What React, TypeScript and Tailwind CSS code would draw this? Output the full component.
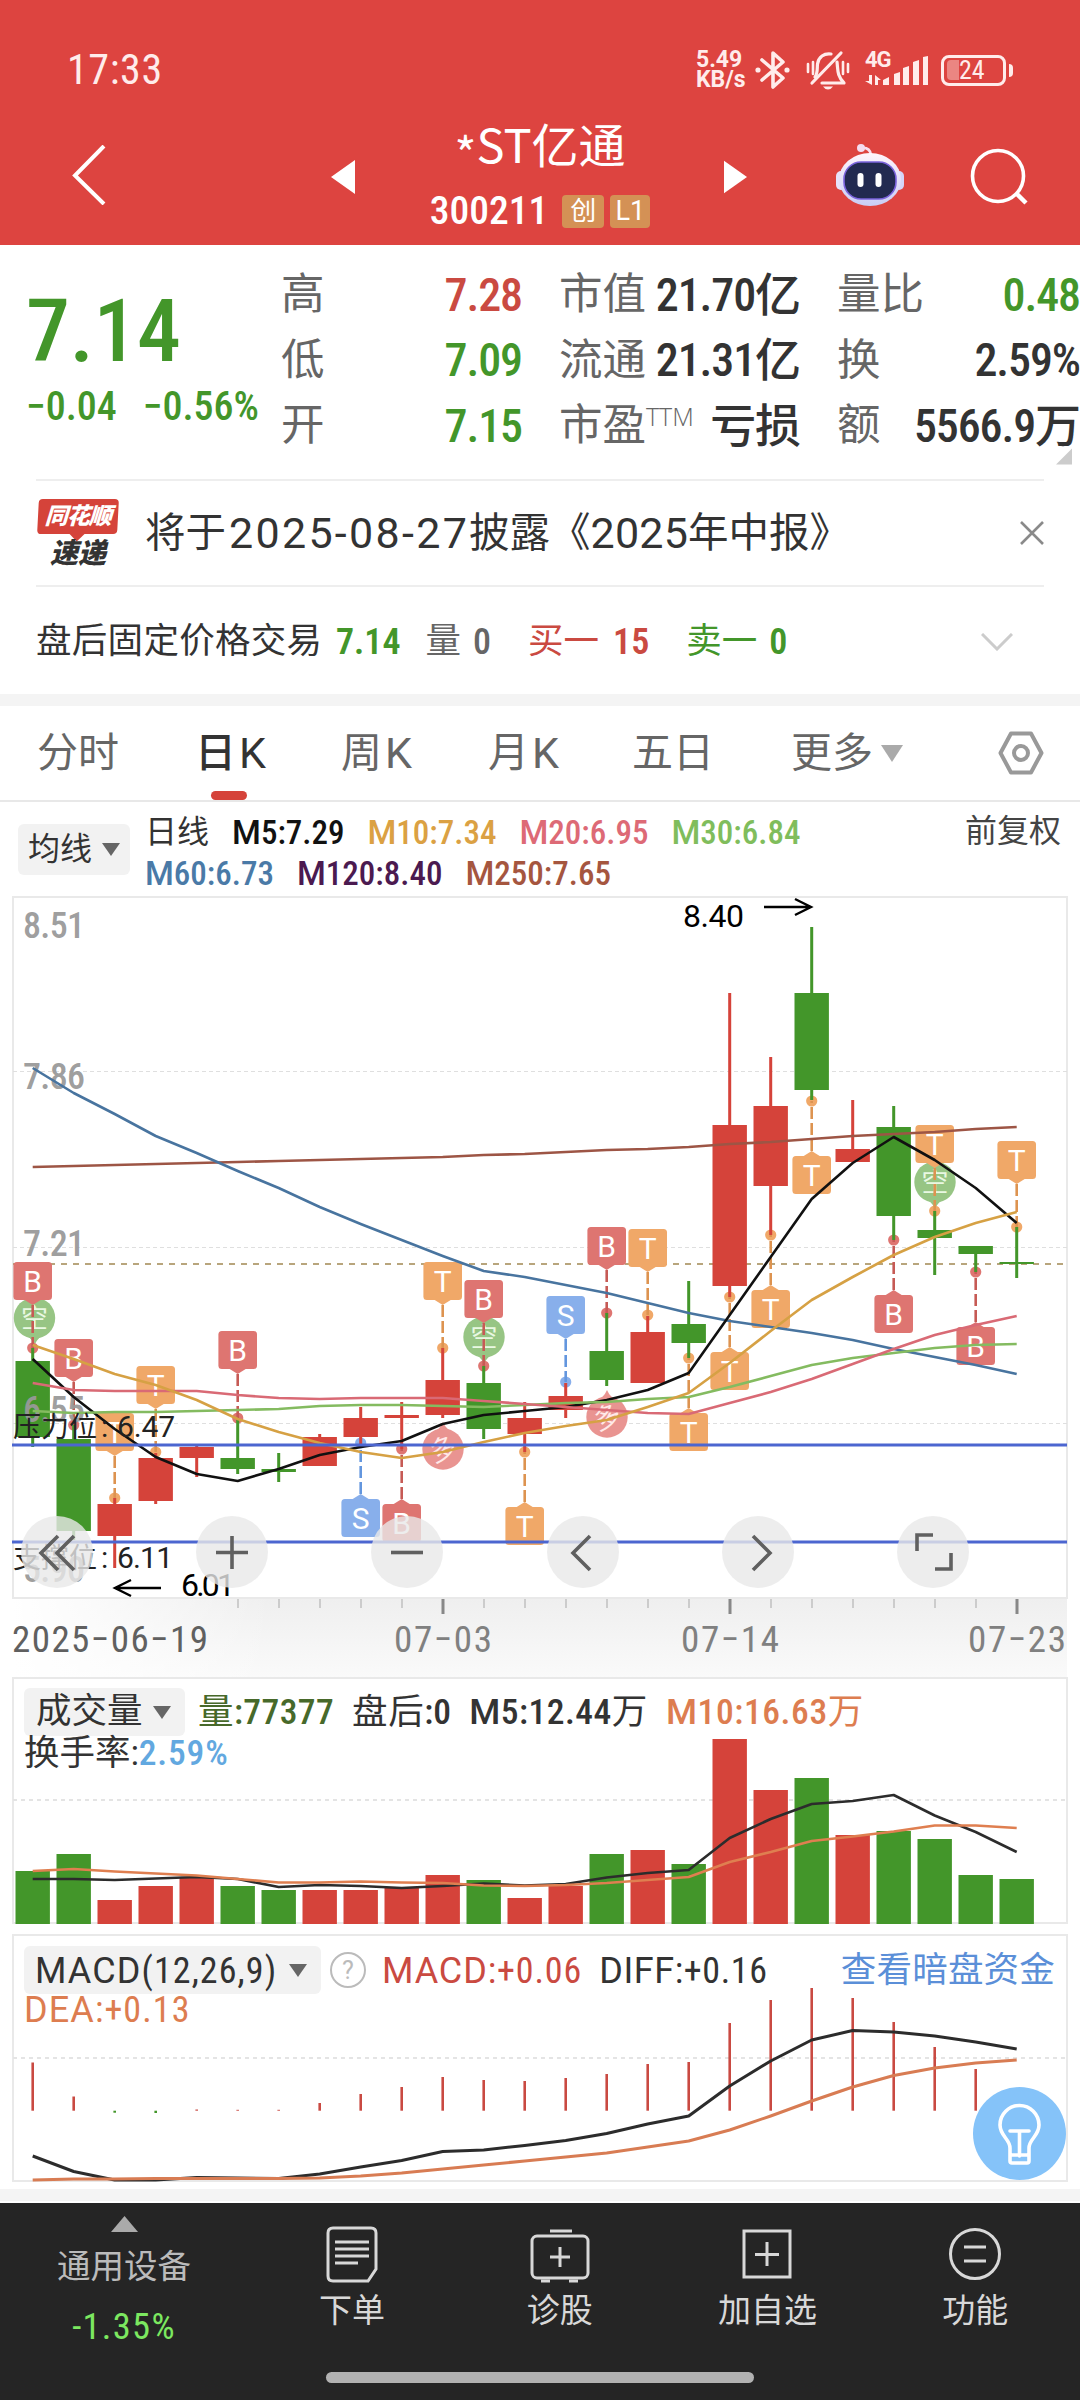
/**
 * Stock Detail Page
 *
 * Purpose:
 * Quote header, K-line chart, volume and MACD panels for a single stock.
 */

import React from 'react';

type Candle = { up: boolean; high: number; top: number; bottom: number; low: number };
type Marker = { i: number; kind: 'B' | 'T' | 'S'; box: number; dot: number };

const RED = '#d5433a';
const GREEN = '#43962a';

// Horizontal centre of the trading day with the given index
const dayX = (i: number) => 32.7 + i * 41;

const candles: Candle[] = [
    { up: false, high: 1348, top: 1361, bottom: 1437, low: 1447 },
    { up: false, high: 1425, top: 1439, bottom: 1531, low: 1540 },
    { up: true, high: 1498, top: 1504, bottom: 1536, low: 1568 },
    { up: true, high: 1453, top: 1458, bottom: 1501, low: 1504 },
    { up: true, high: 1446, top: 1447, bottom: 1458, low: 1477 },
    { up: false, high: 1418, top: 1458, bottom: 1469, low: 1474 },
    { up: false, high: 1453, top: 1469, bottom: 1472, low: 1482 },
    { up: true, high: 1434, top: 1437, bottom: 1466, low: 1466 },
    { up: true, high: 1407, top: 1418, bottom: 1437, low: 1444 },
    { up: true, high: 1402, top: 1415, bottom: 1418, low: 1449 },
    { up: true, high: 1348, top: 1380, bottom: 1415, low: 1418 },
    { up: false, high: 1366, top: 1383, bottom: 1429, low: 1439 },
    { up: true, high: 1402, top: 1418, bottom: 1434, low: 1452 },
    { up: true, high: 1383, top: 1396, bottom: 1410, low: 1418 },
    { up: false, high: 1313, top: 1351, bottom: 1380, low: 1386 },
    { up: true, high: 1316, top: 1332, bottom: 1383, low: 1383 },
    { up: false, high: 1281, top: 1324, bottom: 1343, low: 1358 },
    { up: true, high: 993, top: 1125, bottom: 1286, low: 1297 },
    { up: true, high: 1057, top: 1106, bottom: 1186, low: 1235 },
    { up: false, high: 927, top: 993, bottom: 1090, low: 1100 },
    { up: true, high: 1100, top: 1149, bottom: 1162, low: 1162 },
    { up: false, high: 1106, top: 1127, bottom: 1216, low: 1240 },
    { up: false, high: 1211, top: 1230, bottom: 1238, low: 1275 },
    { up: false, high: 1246, top: 1246, bottom: 1254, low: 1272 },
    { up: false, high: 1227, top: 1262, bottom: 1264, low: 1278 },
];

const markers: Marker[] = [
    { i: 0, kind: 'B', box: 1262, dot: 1348 },
    { i: 1, kind: 'B', box: 1339, dot: 1425 },
    { i: 2, kind: 'T', box: 1413, dot: 1498 },
    { i: 3, kind: 'T', box: 1366, dot: 1452 },
    { i: 5, kind: 'B', box: 1331, dot: 1418 },
    { i: 8, kind: 'S', box: 1499, dot: 1443 },
    { i: 9, kind: 'B', box: 1504, dot: 1449 },
    { i: 10, kind: 'T', box: 1262, dot: 1348 },
    { i: 11, kind: 'B', box: 1280, dot: 1366 },
    { i: 12, kind: 'T', box: 1507, dot: 1452 },
    { i: 13, kind: 'S', box: 1296, dot: 1382 },
    { i: 14, kind: 'B', box: 1227, dot: 1313 },
    { i: 15, kind: 'T', box: 1229, dot: 1315 },
    { i: 16, kind: 'T', box: 1413, dot: 1358 },
    { i: 17, kind: 'T', box: 1352, dot: 1297 },
    { i: 18, kind: 'T', box: 1290, dot: 1235 },
    { i: 19, kind: 'T', box: 1156, dot: 1101 },
    { i: 21, kind: 'B', box: 1295, dot: 1240 },
    { i: 22, kind: 'T', box: 1125, dot: 1211 },
    { i: 23, kind: 'B', box: 1327, dot: 1272 },
    { i: 24, kind: 'T', box: 1141, dot: 1227 },
];

const markerColors = {
    B: { fill: '#de7571', line: '#c65a55' },
    T: { fill: '#f0a868', line: '#dd9350' },
    S: { fill: '#88afeb', line: '#6396de' },
};

const ma5 = [1359, 1397, 1429, 1457, 1474, 1481, 1469, 1455, 1447, 1441, 1424, 1415, 1411, 1407, 1400, 1390, 1373, 1315, 1257, 1199, 1163, 1137, 1160, 1188, 1223];
const ma10 = [1345, 1359, 1374, 1385, 1400, 1419, 1432, 1443, 1452, 1458, 1452, 1442, 1433, 1426, 1420, 1407, 1393, 1363, 1331, 1300, 1277, 1255, 1237, 1223, 1212];
const ma20 = [1383, 1390, 1391, 1391, 1391, 1395, 1398, 1399, 1398, 1398, 1398, 1401, 1404, 1407, 1410, 1413, 1414, 1403, 1392, 1379, 1364, 1349, 1335, 1325, 1316];
const ma30 = [1411, 1413, 1412, 1412, 1411, 1410, 1409, 1406, 1405, 1405, 1406, 1407, 1405, 1403, 1402, 1399, 1397, 1387, 1376, 1365, 1358, 1353, 1348, 1345, 1344];
const ma60 = [1068, 1093, 1114, 1136, 1153, 1171, 1188, 1207, 1224, 1240, 1256, 1271, 1277, 1285, 1293, 1303, 1313, 1321, 1327, 1333, 1340, 1349, 1357, 1365, 1374];
const ma250 = [1167, 1166, 1165, 1164, 1163, 1162, 1161, 1160, 1159, 1158, 1157, 1155, 1154, 1152, 1150, 1149, 1147, 1144, 1142, 1139, 1136, 1134, 1132, 1129, 1127];

const volume = [1871, 1854, 1900, 1886, 1878, 1886, 1890, 1890, 1890, 1888, 1875, 1880, 1898, 1886, 1854, 1850, 1864, 1739, 1790, 1778, 1835, 1831, 1839, 1875, 1879];
const volMa5 = [1879, 1879, 1880, 1878.5, 1877, 1879, 1887, 1885, 1886, 1888, 1886, 1883.5, 1885.5, 1884, 1877.5, 1873, 1870, 1838, 1819, 1804, 1801, 1795, 1815.5, 1832, 1852];
const volMa10 = [1871, 1869, 1871.5, 1873.5, 1875.5, 1879, 1882.5, 1882.5, 1881.5, 1882.5, 1883, 1885.5, 1886, 1885, 1883, 1880, 1877, 1862, 1852, 1841, 1836.5, 1831.5, 1825.5, 1825.5, 1828];

const MACD_ZERO = 2110.7;
const macd = [2062.5, 2096.5, 2112.7, 2113, 2109.5, 2109.8, 2109.8, 2103, 2094, 2087, 2077, 2080, 2081, 2078, 2074, 2064, 2062, 2023, 2000, 1988, 1998, 2022, 2047, 2069, 2088];
const diff = [2156, 2171.5, 2180, 2180, 2177.5, 2178, 2178.5, 2174, 2167, 2160.5, 2151.5, 2150, 2145.5, 2140.5, 2133.5, 2124, 2116, 2086, 2061, 2040, 2030.5, 2032, 2036, 2042, 2049];
const dea = [2180, 2179, 2179, 2178.5, 2178.5, 2178.5, 2178.5, 2178, 2176, 2173, 2169, 2165, 2161, 2157, 2153, 2147, 2141, 2130, 2116, 2101, 2087, 2075.5, 2068, 2063, 2060];

/** Polyline through one value per trading day */
const Line = ({ data, color, width = 2.6 }: { data: number[]; color: string; width?: number }) => (
    <polyline
        points={data.map((y, i) => `${dayX(i)},${y}`).join(' ')}
        fill="none"
        stroke={color}
        strokeWidth={width}
        strokeLinejoin="round"
    />
);

/** Lettered signal box joined to its candle by a dashed stem */
const SignalMarker = ({ i, kind, box, dot }: Marker) => {
    const x = dayX(i);
    const above = box < dot;
    const edge = above ? box + 38 : box;
    const tip = above ? edge + 5 : edge - 5;
    const { fill, line } = markerColors[kind];
    return (
        <g>
            <circle cx={x} cy={dot} r={5.6} fill={fill} />
            <line x1={x} x2={x} y1={tip} y2={dot} stroke={line} strokeWidth={2.6} strokeDasharray="12 4" />
            <path d={`M${x - 8} ${edge}L${x} ${tip}L${x + 8} ${edge}z`} fill={fill} />
            <rect x={x - 19.3} y={box} width={38.6} height={38} rx={3.5} fill={fill} />
            <text x={x} y={box + 30} textAnchor="middle" fill="#fff" className="font-['Roboto'] text-[30px]">{kind}</text>
        </g>
    );
};

/** Round long / short bubble */
const Bubble = ({ x, y, kind }: { x: number; y: number; kind: '空' | '多' }) => {
    const down = kind === '空';
    const s = down ? 1 : -1;
    return (
        <g>
            <path
                d={`M${x - 14} ${y + 14 * s}Q${x - 3} ${y + 19 * s} ${x} ${y + 27 * s}Q${x + 3} ${y + 19 * s} ${x + 14} ${y + 14 * s}z`}
                fill={down ? '#97c584' : '#e99491'}
            />
            <circle cx={x} cy={y} r={20.7} fill={down ? '#97c584' : '#e99491'} />
            <text
                x={x}
                y={y + 10}
                textAnchor="middle"
                fill={down ? '#e9f8e2' : '#ffe9e8'}
                className="text-[27px]"
                transform={down ? undefined : `rotate(-20 ${x} ${y})`}
            >
                {kind}
            </text>
        </g>
    );
};

const Triangle = ({ className }: { className: string }) => (
    <svg viewBox="0 0 20 16" className={className} preserveAspectRatio="none"><path d="M0 0h20L10 16z" fill="currentColor" /></svg>
);

/** Latin capitals at regular width, next to condensed figures */
const Caps = ({ children }: { children: React.ReactNode }) => <span className="font-['Roboto']">{children}</span>;

const StatusBar = () => (
    <div className="flex h-11 items-center pl-[67px] pr-[67px] text-[#ffeceb]">
        <span className="text-[42px] leading-none tracking-[0.6px]">17:33</span>
        <div className="ml-auto flex items-center">
            <div className="w-[50px] font-['Roboto'] text-[23px] font-bold leading-[20px]">
                <div>5.49</div>
                <div>KB/s</div>
            </div>
            <svg viewBox="0 0 36 40" className="ml-[9px] h-10 w-9" fill="none" stroke="currentColor" strokeWidth="3.6" strokeLinejoin="round" strokeLinecap="round">
                <path d="M7 10L28 28L18 37V3L28 12L7 30" />
                <circle cx="3" cy="20" r="1.6" fill="currentColor" strokeWidth="2" />
                <circle cx="32" cy="20" r="1.6" fill="currentColor" strokeWidth="2" />
            </svg>
            <svg viewBox="0 0 44 40" className="ml-[15px] h-10 w-11" fill="none" stroke="currentColor" strokeWidth="3.2" strokeLinecap="round">
                <path d="M6 33L35 3" />
                <path d="M9 27C12 23 11 18 11.500 14C12.500 7 18 3 25 4M31 12C32 20 31 26 38 33H16" strokeLinejoin="round" />
                <path d="M2 14v8M7 12v12M42 14v8M37 12v12" strokeWidth="2.600" />
                <path d="M17 36.500h10q-2 3-5 3t-5-3z" fill="currentColor" stroke="none" />
            </svg>
            <div className="ml-[15px] flex h-10 w-[64px] flex-col">
                <span className="h-[21px] font-['Roboto'] text-[22px] font-bold leading-[20px] tracking-[-1px]">4G</span>
                <svg viewBox="0 0 64 32" className="-mt-[15px] h-8 w-16 shrink-0" fill="currentColor">
                    <path d="M4 19h3v10L0 25h4zM10 29V19l6 5h-3v5z" />
                    <path d="M18 29v-5l6-3v8zM29 29V18l6-2v13zM38 29V12l6-2v19zM48 29V6l6-2v25zM58 29V1l5-1v29z" />
                </svg>
            </div>
            <div className="ml-[12px] flex h-[31px] w-[65px] items-center rounded-[8px] border-[3px] border-current px-[3px]">
                <span className="h-[20px] w-[12px] rounded-l-[4px] bg-[#eb8682]" />
                <span className="text-[26px] leading-none">24</span>
            </div>
            <span className="ml-[3px] h-[13px] w-[4px] rounded-r-full bg-current" />
        </div>
    </div>
);

const Robot = () => (
    <svg viewBox="0 0 68 64" className="ml-[89px] h-16 w-[68px]">
        <defs>
            <linearGradient id="shell" x1="0" y1="0" x2="0" y2="1">
                <stop offset="0" stopColor="#fff5fb" />
                <stop offset="1" stopColor="#c9cdf5" />
            </linearGradient>
        </defs>
        <path d="M25 5q9-1 10 7" fill="none" stroke="#f8dff0" strokeWidth="2.600" />
        <circle cx="25" cy="5" r="4" fill="#f4dcf0" />
        <rect x="0" y="28" width="10" height="19" rx="5" fill="#e6e2fa" />
        <rect x="58" y="28" width="10" height="19" rx="5" fill="#d5d5f8" />
        <ellipse cx="34" cy="36.500" rx="31" ry="26.500" fill="url(#shell)" />
        <rect x="8" y="19" width="52" height="37" rx="17" fill="#222a50" stroke="#7a63dc" strokeWidth="1.600" />
        <rect x="21.500" y="30" width="6" height="14" rx="3" fill="#fff" />
        <rect x="39.500" y="30" width="6" height="14" rx="3" fill="#fff" />
    </svg>
);

const Header = () => (
    <header className="h-[245px] bg-[#dd4440] pt-[48px] text-white">
        <StatusBar />
        <div className="flex h-[153px] items-start pl-[72px]">
            <svg viewBox="0 0 34 60" className="mt-[53px] h-[60px] w-[34px]" fill="none" stroke="currentColor" strokeWidth="4"><path d="M32 1L3 30.500L32 59" /></svg>
            <svg viewBox="0 0 24 34" className="ml-[225px] mt-[68px] h-[34px] w-6" fill="currentColor"><path d="M24 0v34L0 17z" /></svg>
            <div className="ml-[77px] flex w-[216px] flex-col items-center">
                <div className="mt-[22px] flex h-[56px] items-center whitespace-nowrap leading-none">
                    <span className="font-['Noto_Sans_CJK_SC'] text-[47px]"><span className="inline-block translate-y-[9px]">*</span>ST亿通</span>
                </div>
                <div className="mt-[19px] flex h-[44px] items-center gap-[6px]">
                    <span className="mr-[8px] text-[39.5px] font-medium leading-none">300211</span>
                    <span className="flex h-[33px] w-[42px] items-center justify-center rounded-[4px] bg-[#d49155] text-[26px] leading-none">创</span>
                    <span className="flex h-[33px] w-[40px] items-center justify-center rounded-[4px] bg-[#d49155] font-['Roboto'] text-[27px] leading-none">L1</span>
                </div>
            </div>
            <svg viewBox="0 0 24 34" className="ml-[76px] mt-[68px] h-[34px] w-[23px]" fill="currentColor"><path d="M0 0v34L24 17z" /></svg>
            <div className="mt-[51px]"><Robot /></div>
            <svg viewBox="0 0 58 58" className="ml-[66px] mt-[56px] h-[58px] w-[58px]" fill="none" stroke="currentColor" strokeWidth="3.600"><circle cx="28" cy="28" r="25.500" /><path d="M46 45l10 10" strokeWidth="4.500" /></svg>
        </div>
    </header>
);

const Stat = ({ label, value, color = 'text-[#333]' }: { label: React.ReactNode; value: string; color?: string }) => (
    <div className="flex h-[65.5px] items-center justify-between whitespace-nowrap leading-none">
        <span className="text-[43.5px] text-[#666]">{label}</span>
        <span className={`text-[46px] font-medium tracking-[-1.1px] ${color}`}>{value}</span>
    </div>
);

const Quote = () => (
    <section className="relative flex h-[234px] pt-[17px]">
        <div className="w-[281px] pl-[26px] font-medium text-[#43962a]">
            <div className="mt-[23px] text-[88px] leading-[92px] tracking-[-0.5px]">7.14</div>
            <div className="mt-[8px] flex justify-between pr-[22px] text-[40px] leading-[44px] whitespace-nowrap"><span>−0.04</span><span>−0.56%</span></div>
        </div>
        <div className="w-[241px]">
            <Stat label="高" value="7.28" color="text-[#ca4a41]" />
            <Stat label="低" value="7.09" color="text-[#43962a]" />
            <Stat label="开" value="7.15" color="text-[#43962a]" />
        </div>
        <div className="ml-[37px] w-[241px]">
            <Stat label="市值" value="21.70亿" />
            <Stat label="流通" value="21.31亿" />
            <Stat label={<>市盈<span className="relative -top-[14px] font-['Open_Sans'] text-[25px] font-light">TTM</span></>} value="亏损" />
        </div>
        <div className="ml-[37px] w-[243px]">
            <Stat label="量比" value="0.48" color="text-[#43962a]" />
            <Stat label="换" value="2.59%" />
            <Stat label="额" value="5566.9万" />
        </div>
        <svg viewBox="0 0 16 16" className="absolute bottom-[14px] right-[8px] h-[17px] w-4" fill="#ccc"><path d="M16 0v16H0z" /></svg>
    </section>
);

const News = () => (
    <section className="mx-9 flex h-[108px] items-center border-y-2 border-[#eee]">
        <div className="flex w-[84px] flex-col items-center font-black italic leading-none">
            <div className="relative flex h-[35px] w-[80px] -skew-x-3 items-center justify-center rounded-[4px] bg-[#d5433a] text-[23px] tracking-[-1px] text-white">
                同花顺
                <span className="absolute -bottom-[5px] left-[34px] h-3 w-3 rotate-45 bg-[#d5433a]" />
            </div>
            <div className="relative mt-[5px] h-[29px] text-[28px] leading-[29px] text-[#333]">速递</div>
        </div>
        <span className="ml-[25px] flex items-center whitespace-nowrap font-['Roboto','Noto_Sans_CJK_SC',sans-serif] text-[40.5px] leading-none text-[#333]">
            将于
            <span className="pl-[3px] text-[43px] tracking-[2.3px]">2025-08-27</span>
            披露《
            <span className="text-[43px] tracking-[0.2px]">2025</span>
            年中报》
        </span>
        <svg viewBox="0 0 24 24" className="ml-auto h-6 w-6" fill="none" stroke="#8a8a8a" strokeWidth="2.600"><path d="M1 1l22 22M23 1L1 23" /></svg>
    </section>
);

const AfterHours = () => (
    <section className="flex h-[107px] items-center whitespace-nowrap pl-[36px] pr-[67px] pt-[2px] text-[35.5px] leading-none">
        <span className="w-[286px] tracking-[0.3px] text-[#333]">盘后固定价格交易</span>
        <b className="ml-[14px] text-[36px] font-semibold text-[#43962a]">7.14</b>
        <span className="ml-[25px] text-[#666]">量</span>
        <b className="ml-[12px] text-[36px] font-medium text-[#666]">0</b>
        <span className="ml-[37px] text-[#ca4a41]">买一</span>
        <b className="ml-[14px] text-[36px] font-semibold text-[#ca4a41]">15</b>
        <span className="ml-[37px] text-[#43962a]">卖一</span>
        <b className="ml-[12px] text-[36px] font-semibold text-[#43962a]">0</b>
        <svg viewBox="0 0 32 18" className="ml-auto h-[18px] w-8" fill="none" stroke="#ccc" strokeWidth="3"><path d="M1 1l15 15L31 1" /></svg>
    </section>
);

const Tabs = () => (
    <nav className="flex h-[96px] items-center whitespace-nowrap border-b-2 border-[#e8e8e8] pl-[37px] pr-9 text-[41px] leading-none text-[#666]">
        <span className="w-[158px]">分时</span>
        <span className="relative flex h-full w-[146px] items-center gap-[3px] font-medium text-[#333]">
            日<span className="font-['Roboto'] text-[43px] font-normal">K</span>
            <i className="absolute bottom-0 left-[16px] h-[9px] w-[36px] rounded-full bg-[#d5433a]" />
        </span>
        <span className="flex w-[147px] items-center gap-[3px]">周<span className="font-['Roboto'] text-[43px]">K</span></span>
        <span className="flex w-[144px] items-center gap-[3px]">月<span className="font-['Roboto'] text-[43px]">K</span></span>
        <span className="w-[159px]">五日</span>
        <span className="flex items-center gap-[8px]">更多<Triangle className="h-[17px] w-[22px] text-[#aaa]" /></span>
        <svg viewBox="0 0 46 44" className="ml-auto h-11 w-[46px]" fill="none" stroke="#999" strokeWidth="4" strokeLinejoin="round"><path d="M13 2.500h20L43.500 22L33 41.500H13L2.500 22z" /><circle cx="23" cy="22" r="7" /></svg>
    </nav>
);

const MaLegend = () => (
    <section className="flex h-[94px] whitespace-nowrap pl-[18px] pr-[19px] text-[33px] leading-[41px]">
        <div className="mt-[22px] flex h-[51px] w-[112px] items-center rounded-[6px] bg-[#f2f2f2] pl-[10px] text-[32px] text-[#333]">
            均线<Triangle className="ml-[10px] h-[13px] w-[18px] text-[#666]" />
        </div>
        <div className="ml-[15px] mt-[10px] font-medium">
            <div className="flex gap-[23px]">
                <span className="text-[32px] font-normal text-[#333]">日线</span>
                <span className="text-[#111]"><Caps>M</Caps>5:7.29</span>
                <span className="text-[#dba143]"><Caps>M</Caps>10:7.34</span>
                <span className="text-[#dd6a76]"><Caps>M</Caps>20:6.95</span>
                <span className="text-[#80bd5c]"><Caps>M</Caps>30:6.84</span>
            </div>
            <div className="flex gap-[23px]">
                <span className="text-[#4a7aa7]"><Caps>M</Caps>60:6.73</span>
                <span className="text-[#4b1a50]"><Caps>M</Caps>120:8.40</span>
                <span className="text-[#a5563f]"><Caps>M</Caps>250:7.65</span>
            </div>
        </div>
        <span className="ml-auto mt-[9px] text-[32px] text-[#444]">前复权</span>
    </section>
);

const axisLabels = [
    { text: '8.51', y: 938 },
    { text: '7.86', y: 1089 },
    { text: '7.21', y: 1256 },
    { text: '6.55', y: 1422 },
    { text: '5.90', y: 1582 },
];

const chartControls = [
    'M37 20L20 37L37 54M53 20L36 37L53 54',
    'M36 20V53M20 36.500H52',
    'M20 36.500H52',
    'M43 20L26 37L43 54',
    'M31 20L48 37L31 54',
    'M36 19H20V35M38 53H54V37',
];

const KLineChart = () => (
    <section className="relative h-[781px]">
        <svg viewBox="0 896 1080 781" className="h-full w-full">
            <defs>
                <linearGradient id="axisFade" x1="0" y1="0" x2="0" y2="1">
                    <stop offset="0" stopColor="#efefef" />
                    <stop offset="1" stopColor="#fafafa" />
                </linearGradient>
                <linearGradient id="axisSide" x1="0" y1="0" x2="1" y2="0">
                    <stop offset="0" stopColor="#fff" />
                    <stop offset="1" stopColor="#fff" stopOpacity="0" />
                </linearGradient>
            </defs>
            <rect x="13" y="1599" width="1054" height="78" fill="url(#axisFade)" />
            <rect x="13" y="1599" width="260" height="78" fill="url(#axisSide)" />
            <rect x="13" y="897" width="1054" height="701" fill="none" stroke="#e9e9e9" strokeWidth="2" />
            {[1071.5, 1247.5, 1423.5].map(y => (
                <line key={y} x1="13" x2="1067" y1={y} y2={y} stroke="#dfdfdf" strokeWidth="1.200" strokeDasharray="4 3" />
            ))}
            <line x1="13" x2="1067" y1="1264" y2="1264" stroke="#b8a57c" strokeWidth="2" strokeDasharray="6 6" />

            <Bubble x={34.5} y={1318} kind="空" />
            <Bubble x={484} y={1337} kind="空" />
            <Bubble x={935} y={1182} kind="空" />
            <Bubble x={443} y={1449} kind="多" />
            <Bubble x={607} y={1417} kind="多" />
            {markers.map(m => <SignalMarker key={m.i} {...m} />)}

            {candles.map((c, i) => (
                <g key={i} fill={c.up ? RED : GREEN}>
                    <rect x={dayX(i) - 1.5} y={c.high} width={3} height={c.low - c.high} />
                    <rect x={dayX(i) - 17.2} y={c.top} width={34.4} height={c.bottom - c.top} />
                </g>
            ))}

            <g fill="#999" fillOpacity="0.95" className="text-[36px] font-medium">
                {axisLabels.map(l => <text key={l.text} x="23" y={l.y} textLength="62">{l.text}</text>)}
            </g>
            <Line data={ma250} color="#9d5545" />
            <Line data={ma60} color="#48749f" />
            <Line data={ma5} color="#111" />
            <Line data={ma30} color="#84bb60" />
            <Line data={ma20} color="#d96a75" />
            <Line data={ma10} color="#d6a144" />
            <line x1="12" x2="1067" y1="1445" y2="1445" stroke="#4c66d0" strokeWidth="2.800" />
            <line x1="12" x2="1067" y1="1542" y2="1542" stroke="#4c66d0" strokeWidth="2.800" />

            <g fill="#222" className="font-['Roboto','Noto_Sans_CJK_SC',sans-serif] text-[30px]">
                <text x="13" y="1437" textLength="84" className="text-[28px]">压力位</text>
                <text x="101" y="1437">:</text>
                <text x="117" y="1437" textLength="58">6.47</text>
                <text x="13" y="1568" textLength="84" className="text-[28px]">支撑位</text>
                <text x="101" y="1568">:</text>
                <text x="117" y="1568" textLength="56">6.11</text>
            </g>
            <g fill="#000" className="font-['Roboto'] text-[32px]">
                <text x="683" y="927" textLength="61">8.40</text>
                <text x="181" y="1596" textLength="54">6.01</text>
            </g>
            <path d="M764 907H811M795 899L811 907L795 915M161 1588H115M131 1580L115 1588L131 1596" fill="none" stroke="#000" strokeWidth="2.400" />

            {Array.from({ length: 20 }, (_, k) => k + 5).map(i => {
                const major = i === 10 || i === 17 || i === 24;
                return <rect key={i} x={dayX(i) - (major ? 1.2 : 0.5)} y={1599} width={major ? 3 : 1.6} height={major ? 15 : 9} fill={major ? '#888' : '#c4c4c4'} />;
            })}
            <g fill="#808080" className="font-['Roboto_Condensed'] text-[37px]">
                <text x="12" y="1652" textLength="196" fill="#606060">2025−06−19</text>
                <text x="394" y="1652" textLength="98">07−03</text>
                <text x="681" y="1652" textLength="98">07−14</text>
                <text x="968" y="1652" textLength="98">07−23</text>
            </g>
        </svg>
        <div className="absolute left-[21px] top-[620px] flex gap-[103.2px]">
            {chartControls.map(d => (
                <button key={d} className="h-[72px] w-[72px] rounded-full bg-[#e8e8e8]/80">
                    <svg viewBox="0 0 72 72" fill="none" stroke="#606060" strokeWidth="3.600"><path d={d} /></svg>
                </button>
            ))}
        </div>
    </section>
);

const VolumePanel = () => (
    <section className="relative h-[248px]">
        <svg viewBox="0 1677 1080 248" className="h-full w-full">
            <rect x="13" y="1678" width="1054" height="245" fill="none" stroke="#e9e9e9" strokeWidth="2" />
            <line x1="13" x2="1067" y1="1800" y2="1800" stroke="#e4e4e4" strokeWidth="2" strokeDasharray="4 4" />
            {volume.map((y, i) => (
                <rect key={i} x={dayX(i) - 17.2} y={y} width={34.4} height={1924 - y} fill={candles[i].up ? RED : GREEN} />
            ))}
            <Line data={volMa5} color="#2c2c2c" />
            <Line data={volMa10} color="#df7f50" />
        </svg>
        <div className="absolute left-[24px] top-[11px] whitespace-nowrap text-[35.5px] leading-none text-[#333]">
            <div className="flex h-[48px] items-center">
                <div className="flex h-full w-[161px] items-center rounded-[6px] bg-[#f2f2f2] pl-[12px]">成交量<Triangle className="ml-[10px] h-[13px] w-[18px] text-[#666]" /></div>
                <span className="ml-[13px] pt-[2px] font-medium tracking-[0.4px] text-[#47692a]"><span className="font-normal">量</span>:77377</span>
                <span className="ml-[18px] pt-[2px] font-medium"><span className="font-normal tracking-[0.6px]">盘后</span>:0</span>
                <span className="ml-[18px] pt-[2px] font-medium tracking-[0.5px]"><Caps>M</Caps>5:12.44<span className="font-normal">万</span></span>
                <span className="ml-[18px] pt-[2px] font-medium tracking-[0.6px] text-[#dd7d50]"><Caps>M</Caps>10:16.63<span className="font-normal">万</span></span>
            </div>
            <div className="mt-[-3px] h-[40px] leading-[40px]">换手率:<span className="font-medium tracking-[0.8px] text-[#62a8e0]">2.59%</span></div>
        </div>
    </section>
);

const MacdPanel = () => (
    <section className="relative mt-[9px] h-[249px]">
        <svg viewBox="0 1934 1080 249" className="h-full w-full">
            <rect x="13" y="1935" width="1054" height="246" fill="none" stroke="#e9e9e9" strokeWidth="2" />
            <line x1="13" x2="1067" y1="2058" y2="2058" stroke="#e4e4e4" strokeWidth="2" strokeDasharray="4 4" />
            {macd.map((y, i) => (
                <line key={i} x1={dayX(i)} x2={dayX(i)} y1={y} y2={MACD_ZERO} stroke={y > MACD_ZERO ? GREEN : '#c94a42'} strokeWidth="2.600" />
            ))}
            <Line data={diff} color="#2c2c2c" width={3} />
            <Line data={dea} color="#d87c53" width={3} />
        </svg>
        <div className="absolute left-[24px] right-[25px] top-[12px] whitespace-nowrap text-[36px] leading-none text-[#333]">
            <div className="flex h-[48px] items-center">
                <div className="flex h-full w-[297px] items-center rounded-[6px] bg-[#f2f2f2] pl-[11px]">
                    <span className="w-[242px] pt-[1px] tracking-[1.1px]"><Caps>MACD</Caps>(12,26,9)</span><Triangle className="ml-[12px] h-[13px] w-[18px] text-[#666]" />
                </div>
                <span className="ml-[9px] flex h-[36px] w-[36px] items-center justify-center rounded-full border-[2.5px] border-[#bbb] font-['Roboto'] text-[25px] text-[#bbb]">?</span>
                <span className="ml-[16px] pt-[2px] tracking-[0.9px] text-[#ca4a41]"><Caps>MACD</Caps>:+0.06</span>
                <span className="ml-[17px] pt-[2px] tracking-[0.6px]"><Caps>DIFF</Caps>:+0.16</span>
                <span className="ml-auto pt-[1px] text-[35.5px] tracking-[0.2px] text-[#5b8fd8]">查看暗盘资金</span>
            </div>
            <div className="mt-[-4px] h-[40px] leading-[40px] tracking-[1.1px] text-[#dd7d50]"><Caps>DEA</Caps>:+0.13</div>
        </div>
        <button className="absolute right-[14px] top-[153px] h-[93px] w-[93px] rounded-full bg-[#85c3f9]">
            <svg viewBox="0 0 93 93" fill="none" stroke="#fff" strokeWidth="3.600" strokeLinecap="round" strokeLinejoin="round">
                <path d="M37 61C37 52 27 49 27 38a19.500 19.500 0 0 1 39 0C66 49 56 52 56 61M37 61v13q0 2 2 2h15q2 0 2-2V61M39 68h15M37 44h19M46.500 44v25" />
            </svg>
        </button>
    </section>
);

const navItems = [
    { label: '下单', icon: <><path d="M11 3h38q5 0 5 5v36l-8 12H11q-5 0-5-5V8q0-5 5-5z" /><path d="M13 17h34M13 24h34M13 31h34M13 38h23" /></> },
    { label: '诊股', icon: <><rect x="2" y="11" width="56" height="42" rx="5" /><path d="M20 6h22M30 22v20M20 32h20M11 56h9M39 56h9" /></> },
    { label: '加自选', icon: <><rect x="7" y="6" width="46" height="46" /><path d="M30 17v24M18 29.500h24" /></> },
    { label: '功能', icon: <><circle cx="30" cy="29" r="24.500" /><path d="M19 22h22M19 36h22" /></> },
];

const BottomNav = () => (
    <footer className="mt-[2px] h-[197px] bg-[#252525]">
        <div className="flex h-[160px] whitespace-nowrap leading-none">
            <div className="flex w-[248px] flex-col items-center text-[#bbb]">
                <Triangle className="mt-[13px] h-[16px] w-[27px] rotate-180 text-[#aaa]" />
                <span className="mt-[17px] text-[33.5px] leading-[36px]">通用设备</span>
                <span className="mt-[24px] text-[36.5px] leading-[36px] tracking-[1.3px] text-[#7ce860]">-1.35%</span>
            </div>
            {navItems.map(item => (
                <div key={item.label} className="flex w-[207.8px] flex-col items-center text-[33px] text-[#d8d8d8]">
                    <svg viewBox="0 0 60 60" className="mt-[22px] h-[60px] w-[60px]" fill="none" stroke="currentColor" strokeWidth="3">{item.icon}</svg>
                    <span className="mt-[8px] leading-[36px]">{item.label}</span>
                </div>
            ))}
        </div>
        <div className="mx-auto mt-[9px] h-[11px] w-[428px] rounded-full bg-[#b2b2b2]" />
    </footer>
);

export default function App() {
    return (
        <main className="h-[2400px] w-[1080px] overflow-hidden bg-white font-['Roboto_Condensed','Noto_Sans_CJK_SC',sans-serif]">
            <Header />
            <Quote />
            <News />
            <AfterHours />
            <div className="h-[12px] bg-[#f4f4f4]" />
            <Tabs />
            <MaLegend />
            <KLineChart />
            <VolumePanel />
            <MacdPanel />
            <div className="mt-[6px] h-[12px] bg-[#f4f4f4]" />
            <BottomNav />
        </main>
    );
}
